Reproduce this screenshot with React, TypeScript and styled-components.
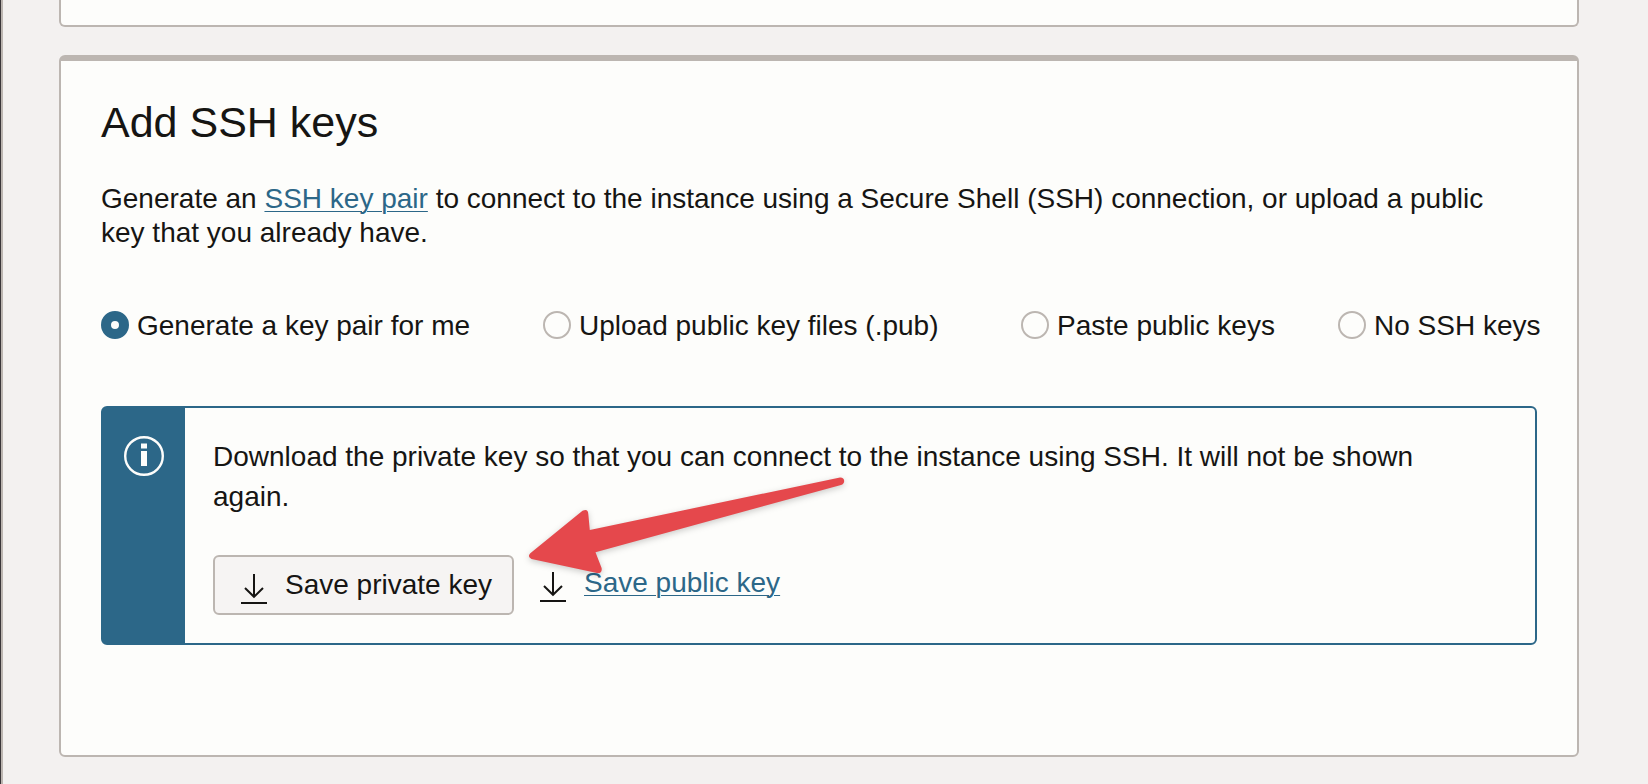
import React, { useState } from "react";
import styled, { createGlobalStyle } from "styled-components";

const GlobalStyle = createGlobalStyle`
  *, *::before, *::after { box-sizing: border-box; }
  html { background: #f3f1f0; }
  body {
    margin: 0;
    color: #161513;
    font-family: "Liberation Sans", Arial, sans-serif;
    font-size: 28px;
    line-height: 34px;
  }
`;

const Frame = styled.div`
  display: flex;
  min-height: 100vh;
  border-left: 1px solid #3a3639;
  background: #f3f1f0;
`;

const Page = styled.main`
  flex: 1;
  display: flex;
  flex-direction: column;
  gap: 28px;
  padding: 0 69px 27px 56px;
  border-left: 2px solid #bcb6b1;
`;

const PreviousCard = styled.section`
  height: 27px;
  border: 2px solid #bcb6b1;
  border-top: 0;
  border-radius: 0 0 6px 6px;
  background: #fdfdfb;
`;

const Card = styled.section`
  padding: 37px 40px 110px;
  border: 2px solid #bcb6b1;
  border-top-width: 6px;
  border-radius: 6px;
  background: #fdfdfb;
`;

const Title = styled.h2`
  margin: 0;
  font-size: 43px;
  font-weight: 400;
  line-height: 48px;
`;

const Description = styled.p`
  margin: 36px 0 0;
  padding-right: 28px;
`;

const TextLink = styled.a`
  color: #2c6788;
  text-decoration: underline;
  text-decoration-thickness: 1px;
  text-underline-offset: 3px;
`;

const KeyOptions = styled.fieldset`
  display: grid;
  grid-template-columns: 442fr 478fr 317fr 199fr;
  margin: 57px 0 0;
  padding: 0;
  border: 0;
`;

const Option = styled.label`
  display: flex;
  align-items: center;
  gap: 8px;
  min-width: 0;
  white-space: nowrap;
`;

const OptionText = styled.span`
  padding-top: 2px;
`;

const Radio = styled.input`
  appearance: none;
  flex: none;
  width: 28px;
  height: 28px;
  margin: 0;
  border: 2px solid #bcb6b1;
  border-radius: 50%;
  background: #fdfdfb;

  &:checked {
    border: 10px solid #2c6788;
  }
`;

const Notice = styled.div`
  display: flex;
  margin-top: 63px;
  border: 2px solid #2c6788;
  border-radius: 6px;
`;

const NoticeStrip = styled.div`
  flex: none;
  display: flex;
  justify-content: center;
  align-items: flex-start;
  width: 82px;
  padding-top: 28px;
  background: #2c6788;
`;

const NoticeBody = styled.div`
  position: relative;
  flex: 1;
  padding: 29px 28px 28px;
`;

const NoticeText = styled.p`
  margin: 0;
  padding-right: 56px;
  line-height: 40px;
`;

const Actions = styled.div`
  display: flex;
  align-items: center;
  gap: 26px;
  margin-top: 38px;
`;

const SaveButton = styled.button`
  display: flex;
  align-items: center;
  gap: 18px;
  height: 60px;
  padding: 0 20px 0 26px;
  border: 2px solid #bcb6b1;
  border-radius: 6px;
  background: #f6f4f3;
  color: inherit;
  font: inherit;
`;

const SaveLink = styled.span`
  display: flex;
  align-items: center;
  gap: 18px;
  margin-bottom: 4px;
`;

const DownloadGlyph = styled.svg`
  flex: none;
  margin-top: 8px;
`;

const Arrow = styled.svg`
  position: absolute;
  left: 335px;
  top: 62px;
  overflow: visible;
  pointer-events: none;
  filter: drop-shadow(0 2px 3px rgba(0, 0, 0, 0.2));
`;

function InfoIcon() {
  return (
    <svg width="40" height="40" viewBox="0 0 40 40" aria-hidden="true">
      <circle cx="20" cy="20" r="18.8" fill="none" stroke="#fdfdfb" strokeWidth="2.4" />
      <rect x="17" y="7.5" width="6" height="5" fill="#fdfdfb" />
      <rect x="17" y="15" width="6" height="15" fill="#fdfdfb" />
    </svg>
  );
}

function DownloadIcon() {
  return (
    <DownloadGlyph width="26" height="30" viewBox="0 0 26 30" fill="none" stroke="#161513" strokeWidth="2" aria-hidden="true">
      <path d="M13 0V23M4 14l9 8.8L22 14M0 29H26" />
    </DownloadGlyph>
  );
}

const options = [
  { id: "generate", label: "Generate a key pair for me" },
  { id: "upload", label: "Upload public key files (.pub)" },
  { id: "paste", label: "Paste public keys" },
  { id: "none", label: "No SSH keys" },
];

export default function App() {
  const [choice, setChoice] = useState("generate");

  return (
    <>
      <GlobalStyle />
      <Frame>
        <Page>
          <PreviousCard />
          <Card>
            <Title>Add SSH keys</Title>
            <Description>
              Generate an <TextLink href="#key-pair">SSH key pair</TextLink> to connect to the instance using a
              Secure Shell (SSH) connection, or upload a public key that you already have.
            </Description>
            <KeyOptions aria-label="SSH key source">
              {options.map((option) => (
                <Option key={option.id} htmlFor={option.id}>
                  <Radio
                    type="radio"
                    name="ssh-key"
                    id={option.id}
                    checked={choice === option.id}
                    onChange={() => setChoice(option.id)}
                  />
                  <OptionText>{option.label}</OptionText>
                </Option>
              ))}
            </KeyOptions>
            <Notice>
              <NoticeStrip>
                <InfoIcon />
              </NoticeStrip>
              <NoticeBody>
                <NoticeText>
                  Download the private key so that you can connect to the instance using SSH. It will not be shown
                  again.
                </NoticeText>
                <Actions>
                  <SaveButton type="button">
                    <DownloadIcon />
                    Save private key
                  </SaveButton>
                  <SaveLink>
                    <DownloadIcon />
                    <TextLink href="#public-key">Save public key</TextLink>
                  </SaveLink>
                </Actions>
                <Arrow width="330" height="110" viewBox="520 470 330 110" aria-hidden="true">
                  <path
                    d="M530.3 553.2L582.5 510.8Q588 508 588.3 514L589.8 530L840 477.4Q844 477.2 844.2 481Q844 484 841 485L595.5 552.2L601.6 568Q602.5 573.5 597 573L531.5 559Q527 557 530.3 553.2Z"
                    fill="#e5484c"
                  />
                </Arrow>
              </NoticeBody>
            </Notice>
          </Card>
        </Page>
      </Frame>
    </>
  );
}
